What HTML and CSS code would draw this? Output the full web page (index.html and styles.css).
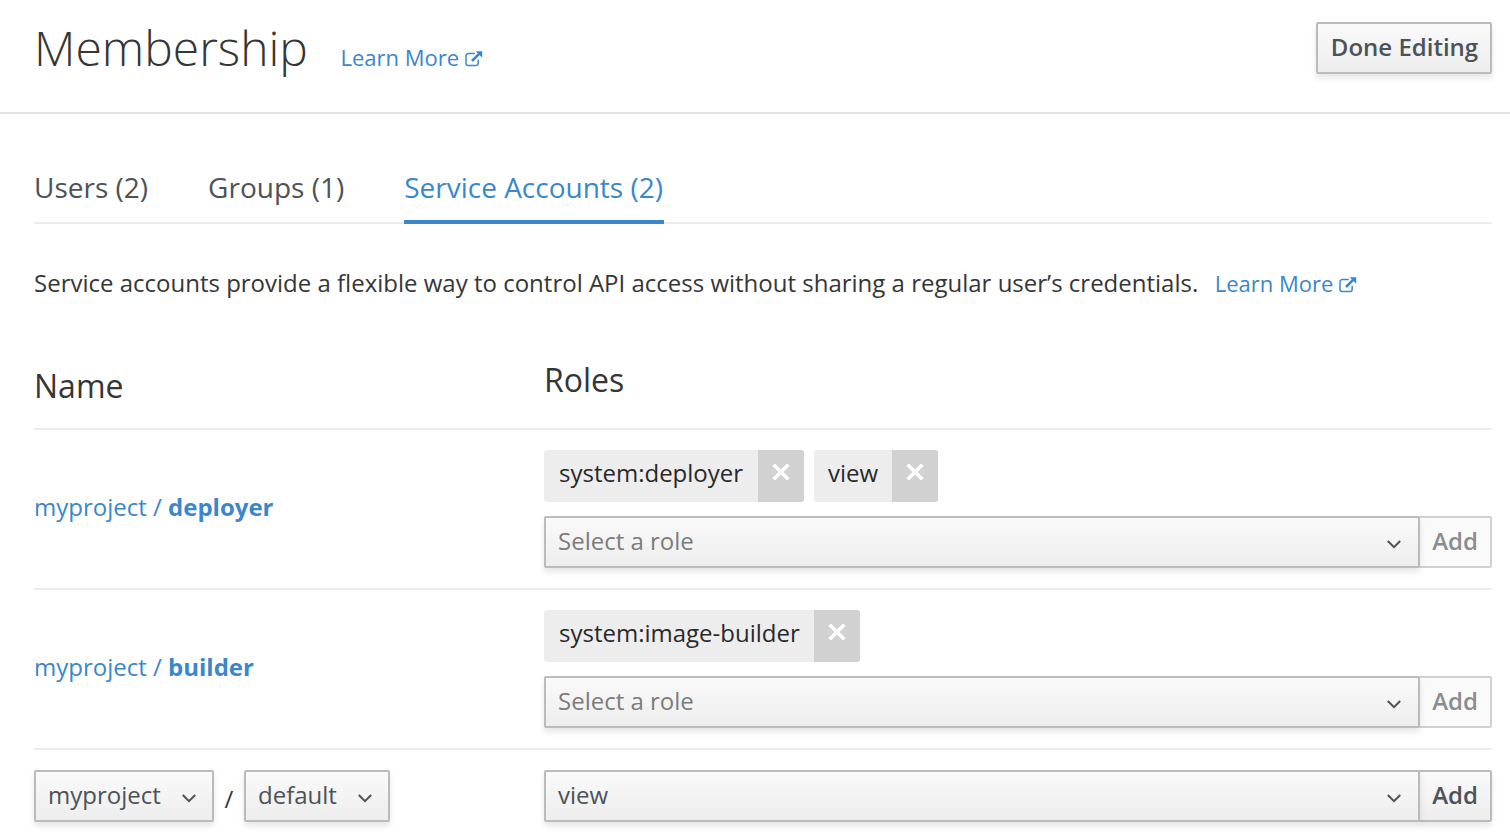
FILE: index.html
```html
<!DOCTYPE html>
<html lang="en">
<head>
<meta charset="utf-8">
<title>Membership</title>
<link rel="stylesheet" href="styles.css">
</head>
<body>
<svg width="0" height="0" class="defs">
  <symbol id="ext" viewBox="0 0 18 18"><path d="M9.8 3.5H3.3A2.3 2.3 0 0 0 1 5.8v7.4a2.3 2.3 0 0 0 2.3 2.3h7.6a2.3 2.3 0 0 0 2.3-2.3V9.8" fill="none" stroke="currentColor" stroke-width="1.5"/><path d="M7 11 14.6 3.4" stroke="currentColor" stroke-width="2.6"/><path d="M10.6 1.2h6.6v6.6z" fill="currentColor"/></symbol>
  <symbol id="chev" viewBox="0 0 14 10"><path d="M.8 2l6.2 6.2L13.200 2" fill="none" stroke="currentColor" stroke-width="2"/></symbol>
  <symbol id="x" viewBox="0 0 18 18"><path d="M1.700 1.700l14.600 14.600M16.300 1.700L1.700 16.300" fill="none" stroke="currentColor" stroke-width="3.500"/></symbol>
</svg>
<header class="header">
  <h1 class="title">Membership</h1>
  <a class="learn">Learn More <svg class="ext"><use href="#ext"/></svg></a>
  <button class="btn done">Done Editing</button>
</header>
<main class="main">
  <nav class="tabs"><a class="tab">Users (2)</a><a class="tab">Groups (1)</a><a class="tab active">Service Accounts (2)</a></nav>
  <p class="intro"><span class="desc">Service accounts provide a flexible way to control API access without sharing a regular user’s credentials.</span><a class="learn">Learn More <svg class="ext"><use href="#ext"/></svg></a></p>
  <div class="row heads"><h2 class="name-head">Name</h2><h2 class="roles-head">Roles</h2></div>
  <div class="row entry">
    <a class="account">myproject / <b>deployer</b></a>
    <div class="roles">
      <div class="chips"><span class="chip"><span class="chip-label w1">system:deployer</span><span class="close"><svg><use href="#x"/></svg></span></span><span class="chip"><span class="chip-label w2">view</span><span class="close"><svg><use href="#x"/></svg></span></span></div>
      <div class="group"><div class="select wide muted">Select a role<svg class="chev"><use href="#chev"/></svg></div><button class="btn add disabled">Add</button></div>
    </div>
  </div>
  <div class="row entry">
    <a class="account">myproject / <b>builder</b></a>
    <div class="roles">
      <div class="chips"><span class="chip"><span class="chip-label w3">system:image-builder</span><span class="close"><svg><use href="#x"/></svg></span></span></div>
      <div class="group"><div class="select wide muted">Select a role<svg class="chev"><use href="#chev"/></svg></div><button class="btn add disabled">Add</button></div>
    </div>
  </div>
  <div class="row new">
    <div class="pickers"><div class="select project">myproject<svg class="chev"><use href="#chev"/></svg></div><span class="slash">/</span><div class="select acct">default<svg class="chev"><use href="#chev"/></svg></div></div>
    <div class="group"><div class="select wide">view<svg class="chev"><use href="#chev"/></svg></div><button class="btn add">Add</button></div>
  </div>
</main>
</body>
</html>
```
FILE: styles.css
```css
* { box-sizing: border-box; }
body { margin: 0; height: 836px; overflow: hidden; background: #fff; color: #363636; font: 24px/36px "Open Sans", sans-serif; }
h1, h2, p { margin: 0; font-weight: 400; }
.defs { position: absolute; }
.header { display: flex; height: 114px; padding: 0 18px 0 34px; border-bottom: 2px solid #e2e2e2; }
.title { font-size: 48px; line-height: 60px; font-weight: 300; padding-top: 18px; width: 306.5px; }
.learn { color: #3a87cb; font-size: 22px; white-space: nowrap; }
.header .learn { padding-top: 39px; }
.ext { width: 18px; height: 18px; vertical-align: -2px; }
.btn { font: 600 24px/30px "Open Sans", sans-serif; color: #4d5258; height: 52px; border: 2px solid #bbb; background: linear-gradient(#fafafa, #ededed); box-shadow: 0 4px 6px rgba(3,3,3,.1); padding: 0 0 3px; border-radius: 2px; }
.done { width: 176px; margin: 22px 0 0 auto; padding-left: 1px; }
.main { padding: 0 18px 0 34px; }
.tabs { display: flex; gap: 60px; height: 110px; padding-top: 51px; border-bottom: 2px solid #ededed; font-size: 28px; line-height: 44px; color: #4d5258; white-space: nowrap; }
.tab { height: 59px; }
.active { width: 260px; color: #3a87cb; border-bottom: 4px solid #3a87cb; }
.intro { display: flex; gap: 16.5px; height: 120px; padding-top: 41px; white-space: nowrap; }
.row { display: grid; grid-template-columns: 510px 1fr; border-bottom: 2px solid #ededed; }
.heads { height: 86px; }
.heads h2 { font-size: 32px; line-height: 44px; }
.name-head { padding-top: 20px; }
.roles-head { padding-top: 14px; }
.entry { height: 160px; }
.account { color: #3a87cb; padding-top: 59px; }
.chips { display: flex; gap: 10px; padding-top: 20px; height: 86px; }
.chip { display: flex; height: 52px; background: #ededed; border-radius: 3px; overflow: hidden; line-height: 45px; }
.chip-label { padding-left: 15px; white-space: nowrap; color: #292929; }
.chip-label.w2 { padding-left: 14px; }
.w1 { width: 214px; }
.w2 { width: 78px; }
.w3 { width: 270px; }
.close { width: 46px; background: #d1d1d1; color: #fff; }
.close svg { display: block; width: 18px; height: 18px; margin: 13px 0 0 13.5px; }
.group { display: flex; }
.select { display: flex; justify-content: space-between; height: 52px; border: 2px solid #bbb; background: linear-gradient(#fafafa, #ededed); box-shadow: 0 4px 6px rgba(3,3,3,.1); color: #4d5258; line-height: 45px; padding-left: 12px; border-radius: 2px; }
.wide { width: 876px; position: relative; z-index: 1; }
.muted { color: #7c7c7c; }
.chev { width: 14px; height: 10px; margin: 21px 16px 0 0; color: #4d5258; }
.wide .chev { margin-right: 17px; }
.add { width: 74px; margin-left: -2px; }
.disabled { color: #8b8d8f; background: #fafafa; border-color: #d1d1d1; box-shadow: none; }
.new { border: 0; padding-top: 20px; }
.pickers { display: flex; }
.project { width: 180px; }
.acct { width: 146px; }
.slash { width: 30px; text-align: center; padding-top: 11px; }
```
